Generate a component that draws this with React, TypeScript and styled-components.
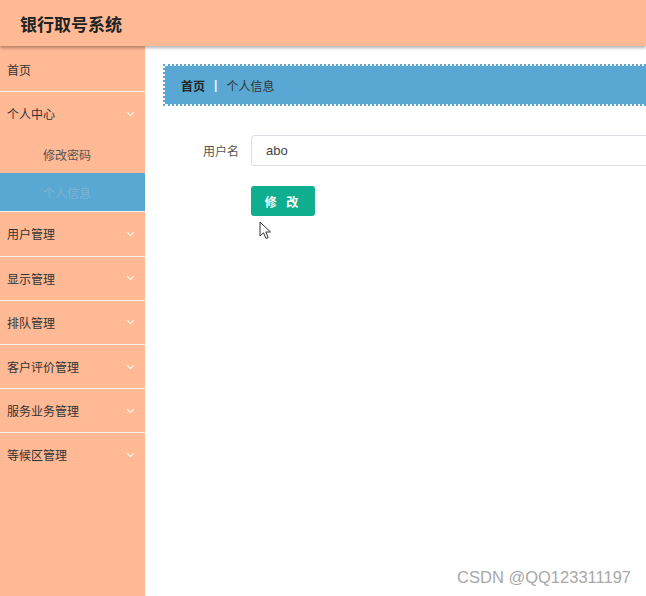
import React from 'react';
import styled, { createGlobalStyle } from 'styled-components';

const GlobalStyle = createGlobalStyle`
  html, body { margin: 0; padding: 0; height: 100%; }
  body {
    font-family: "Liberation Sans", "Noto Sans CJK SC", sans-serif;
    background: #fff;
    overflow: hidden;
  }
  #root { height: 100%; }
`;

const menu = [
  { title: '首页', arrow: false },
  { title: '个人中心', arrow: true, children: ['修改密码', '个人信息'] },
  { title: '用户管理', arrow: true },
  { title: '显示管理', arrow: true },
  { title: '排队管理', arrow: true },
  { title: '客户评价管理', arrow: true },
  { title: '服务业务管理', arrow: true },
  { title: '等候区管理', arrow: true },
];

const Chevron = () => (
  <svg width="9" height="6" viewBox="0 0 9 6">
    <path d="M1 1 L4.5 4.5 L8 1" fill="none" stroke="#fff3ea" strokeWidth="1.1" />
  </svg>
);

function App() {
  return (
    <Page>
      <GlobalStyle />
      <Header>银行取号系统</Header>
      <Body>
        <Sidebar>
          {menu.map((m) => (
            <MenuGroup key={m.title}>
              <MenuItem>
                <span>{m.title}</span>
                {m.arrow && <Chevron />}
              </MenuItem>
              {m.children?.map((c) => (
                <SubItem key={c} $active={c === '个人信息'}>{c}</SubItem>
              ))}
            </MenuGroup>
          ))}
        </Sidebar>
        <Main>
          <Breadcrumb>
            <strong>首页</strong>
            <Sep>|</Sep>
            <span>个人信息</span>
          </Breadcrumb>
          <Form>
            <FormRow>
              <Label>用户名</Label>
              <Input defaultValue="abo" />
            </FormRow>
            <FormRow>
              <Label />
              <SubmitButton>修 改</SubmitButton>
            </FormRow>
          </Form>
          <Cursor width="14" height="20" viewBox="0 0 14 20">
            <path d="M1 1 L1 15 L4.5 11.8 L7 17.5 L9.2 16.5 L6.8 11 L11.5 11 Z" fill="#fff" stroke="#333" strokeWidth="1" strokeLinejoin="round" />
          </Cursor>
          <Watermark>CSDN @QQ123311197</Watermark>
        </Main>
      </Body>
    </Page>
  );
}

export default App;

const Page = styled.div`
  height: 596px;
  display: flex;
  flex-direction: column;
`;

const Header = styled.div`
  height: 46px;
  flex-shrink: 0;
  background: #ffb994;
  box-shadow: 0 2px 3px rgba(0, 0, 0, 0.3);
  position: relative;
  z-index: 2;
  display: flex;
  align-items: center;
  padding-left: 20px;
  font-size: 17px;
  font-weight: 700;
  color: #222;
`;

const Body = styled.div`
  flex: 1;
  display: flex;
  min-height: 0;
`;

const Sidebar = styled.div`
  width: 145px;
  flex-shrink: 0;
  background: #ffb994;
  padding-top: 2px;
`;

const MenuGroup = styled.div`
  border-bottom: 1px solid #fff1e8;
  &:last-child { border-bottom: none; }
`;

const MenuItem = styled.div`
  height: 43.2px;
  display: flex;
  align-items: center;
  justify-content: space-between;
  padding: 0 10px 0 7px;
  font-size: 12px;
  color: #333;
`;

const SubItem = styled.div<{ $active?: boolean }>`
  height: 38px;
  display: flex;
  align-items: center;
  padding-left: 43px;
  font-size: 12px;
  color: ${(p) => (p.$active ? '#7fb3cf' : '#555')};
  background: ${(p) => (p.$active ? '#58a8d3' : 'transparent')};
`;

const Main = styled.div`
  flex: 1;
  position: relative;
  padding: 18px 0 0 18px;
  min-width: 0;
`;

const Breadcrumb = styled.div`
  height: 38px;
  display: flex;
  align-items: center;
  padding-left: 16px;
  background: #58a8d3;
  background-clip: padding-box;
  border: 2px dotted #58a8d3;
  border-right: none;
  font-size: 12px;
  color: #333;
  strong { font-weight: 700; color: #222; }
`;

const Sep = styled.span`
  color: #e8f4fb;
  margin: 0 9px;
  font-weight: 700;
`;

const Form = styled.div`
  display: flex;
  flex-direction: column;
  gap: 20px;
  margin-top: 29px;
`;

const FormRow = styled.div`
  display: flex;
  align-items: center;
`;

const Label = styled.label`
  width: 76px;
  padding-right: 12px;
  text-align: right;
  font-size: 12px;
  color: #555;
  flex-shrink: 0;
`;

const Input = styled.input`
  flex: 1;
  height: 31px;
  box-sizing: border-box;
  border: 1px solid #dcdfe6;
  border-right: none;
  border-radius: 4px 0 0 4px;
  padding: 0 14px;
  font-family: "Liberation Sans", sans-serif;
  font-size: 13px;
  color: #444;
  outline: none;
`;

const SubmitButton = styled.button`
  width: 64px;
  height: 30px;
  border: none;
  border-radius: 3px;
  background: #0eae8f;
  color: #fff;
  font-weight: 700;
  font-size: 12px;
  letter-spacing: 3px;
  font-family: "Liberation Sans", "Noto Sans CJK SC", sans-serif;
`;

const Cursor = styled.svg`
  position: absolute;
  left: 114px;
  top: 175px;
`;

const Watermark = styled.div`
  position: absolute;
  right: 15px;
  bottom: 9px;
  font-size: 16.5px;
  color: #a8a8a8;
`;
